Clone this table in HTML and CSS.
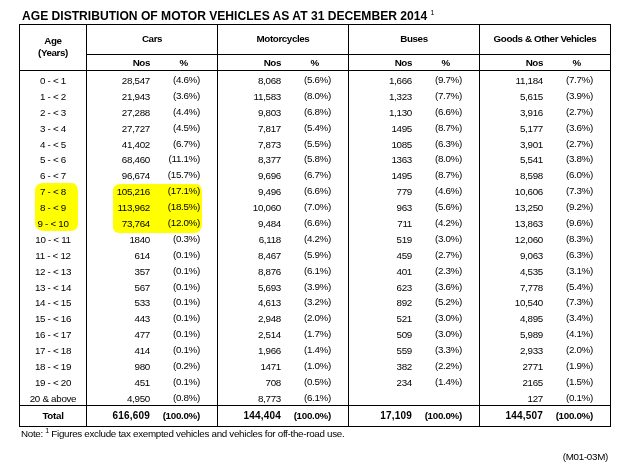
FILE: index.html
```html
<!DOCTYPE html>
<html>
<head>
<meta charset="utf-8">
<link rel="stylesheet" href="styles.css">
</head>
<body>
<div class="page">
  <div class="title">AGE DISTRIBUTION OF MOTOR VEHICLES AS AT 31 DECEMBER 2014 <sup class="tsup">1</sup></div>
  <div class="wrap">
    <div class="tbl">
      <div class="agehd">Age<br>(Years)</div>
      <div class="g">Cars</div>
      <div class="g">Motorcycles</div>
      <div class="g">Buses</div>
      <div class="g">Goods &amp; Other Vehicles</div>
      <div class="hn">Nos</div><div class="hp">%</div>
      <div class="hn">Nos</div><div class="hp">%</div>
      <div class="hn">Nos</div><div class="hp">%</div>
      <div class="hn">Nos</div><div class="hp">%</div>

      <div class="a">0 - &lt; 1</div><div class="n">28,547</div><div class="p">(4.6%)</div><div class="n">8,068</div><div class="p">(5.6%)</div><div class="n">1,666</div><div class="p">(9.7%)</div><div class="n">11,184</div><div class="p">(7.7%)</div>
      <div class="a">1 - &lt; 2</div><div class="n">21,943</div><div class="p">(3.6%)</div><div class="n">11,583</div><div class="p">(8.0%)</div><div class="n">1,323</div><div class="p">(7.7%)</div><div class="n">5,615</div><div class="p">(3.9%)</div>
      <div class="a">2 - &lt; 3</div><div class="n">27,288</div><div class="p">(4.4%)</div><div class="n">9,803</div><div class="p">(6.8%)</div><div class="n">1,130</div><div class="p">(6.6%)</div><div class="n">3,916</div><div class="p">(2.7%)</div>
      <div class="a">3 - &lt; 4</div><div class="n">27,727</div><div class="p">(4.5%)</div><div class="n">7,817</div><div class="p">(5.4%)</div><div class="n">1495</div><div class="p">(8.7%)</div><div class="n">5,177</div><div class="p">(3.6%)</div>
      <div class="a">4 - &lt; 5</div><div class="n">41,402</div><div class="p">(6.7%)</div><div class="n">7,873</div><div class="p">(5.5%)</div><div class="n">1085</div><div class="p">(6.3%)</div><div class="n">3,901</div><div class="p">(2.7%)</div>
      <div class="a">5 - &lt; 6</div><div class="n">68,460</div><div class="p">(11.1%)</div><div class="n">8,377</div><div class="p">(5.8%)</div><div class="n">1363</div><div class="p">(8.0%)</div><div class="n">5,541</div><div class="p">(3.8%)</div>
      <div class="a">6 - &lt; 7</div><div class="n">96,674</div><div class="p">(15.7%)</div><div class="n">9,696</div><div class="p">(6.7%)</div><div class="n">1495</div><div class="p">(8.7%)</div><div class="n">8,598</div><div class="p">(6.0%)</div>
      <div class="a">7 - &lt; 8</div><div class="n">105,216</div><div class="p">(17.1%)</div><div class="n">9,496</div><div class="p">(6.6%)</div><div class="n">779</div><div class="p">(4.6%)</div><div class="n">10,606</div><div class="p">(7.3%)</div>
      <div class="a">8 - &lt; 9</div><div class="n">113,962</div><div class="p">(18.5%)</div><div class="n">10,060</div><div class="p">(7.0%)</div><div class="n">963</div><div class="p">(5.6%)</div><div class="n">13,250</div><div class="p">(9.2%)</div>
      <div class="a">9 - &lt; 10</div><div class="n">73,764</div><div class="p">(12.0%)</div><div class="n">9,484</div><div class="p">(6.6%)</div><div class="n">711</div><div class="p">(4.2%)</div><div class="n">13,863</div><div class="p">(9.6%)</div>
      <div class="a">10 - &lt; 11</div><div class="n">1840</div><div class="p">(0.3%)</div><div class="n">6,118</div><div class="p">(4.2%)</div><div class="n">519</div><div class="p">(3.0%)</div><div class="n">12,060</div><div class="p">(8.3%)</div>
      <div class="a">11 - &lt; 12</div><div class="n">614</div><div class="p">(0.1%)</div><div class="n">8,467</div><div class="p">(5.9%)</div><div class="n">459</div><div class="p">(2.7%)</div><div class="n">9,063</div><div class="p">(6.3%)</div>
      <div class="a">12 - &lt; 13</div><div class="n">357</div><div class="p">(0.1%)</div><div class="n">8,876</div><div class="p">(6.1%)</div><div class="n">401</div><div class="p">(2.3%)</div><div class="n">4,535</div><div class="p">(3.1%)</div>
      <div class="a">13 - &lt; 14</div><div class="n">567</div><div class="p">(0.1%)</div><div class="n">5,693</div><div class="p">(3.9%)</div><div class="n">623</div><div class="p">(3.6%)</div><div class="n">7,778</div><div class="p">(5.4%)</div>
      <div class="a">14 - &lt; 15</div><div class="n">533</div><div class="p">(0.1%)</div><div class="n">4,613</div><div class="p">(3.2%)</div><div class="n">892</div><div class="p">(5.2%)</div><div class="n">10,540</div><div class="p">(7.3%)</div>
      <div class="a">15 - &lt; 16</div><div class="n">443</div><div class="p">(0.1%)</div><div class="n">2,948</div><div class="p">(2.0%)</div><div class="n">521</div><div class="p">(3.0%)</div><div class="n">4,895</div><div class="p">(3.4%)</div>
      <div class="a">16 - &lt; 17</div><div class="n">477</div><div class="p">(0.1%)</div><div class="n">2,514</div><div class="p">(1.7%)</div><div class="n">509</div><div class="p">(3.0%)</div><div class="n">5,989</div><div class="p">(4.1%)</div>
      <div class="a">17 - &lt; 18</div><div class="n">414</div><div class="p">(0.1%)</div><div class="n">1,966</div><div class="p">(1.4%)</div><div class="n">559</div><div class="p">(3.3%)</div><div class="n">2,933</div><div class="p">(2.0%)</div>
      <div class="a">18 - &lt; 19</div><div class="n">980</div><div class="p">(0.2%)</div><div class="n">1471</div><div class="p">(1.0%)</div><div class="n">382</div><div class="p">(2.2%)</div><div class="n">2771</div><div class="p">(1.9%)</div>
      <div class="a">19 - &lt; 20</div><div class="n">451</div><div class="p">(0.1%)</div><div class="n">708</div><div class="p">(0.5%)</div><div class="n">234</div><div class="p">(1.4%)</div><div class="n">2165</div><div class="p">(1.5%)</div>
      <div class="a">20 &amp; above</div><div class="n">4,950</div><div class="p">(0.8%)</div><div class="n">8,773</div><div class="p">(6.1%)</div><div class="n"></div><div class="p"></div><div class="n">127</div><div class="p">(0.1%)</div>

      <div class="a t">Total</div><div class="n t tn">616,609</div><div class="p t">(100.0%)</div><div class="n t tn">144,404</div><div class="p t">(100.0%)</div><div class="n t tn">17,109</div><div class="p t">(100.0%)</div><div class="n t tn">144,507</div><div class="p t">(100.0%)</div>
    </div>
    <div class="hl hl-age"></div>
    <div class="hl hl-cars"></div>
  </div>
  <div class="note">Note: <sup class="nsup">1</sup> Figures exclude tax exempted vehicles and vehicles for off-the-road use.</div>
  <div class="code">(M01-03M)</div>
</div>
</body>
</html>
```
FILE: styles.css
```css
html, body {
  margin: 0;
  padding: 0;
  background: #fff;
}
body {
  font-family: "Liberation Sans", Arial, sans-serif;
  color: #000;
}
.page {
  padding: 10px 19px 0 19px;
}
.title {
  font-size: 12.1px;
  font-weight: bold;
  line-height: 13px;
  height: 13px;
  padding-left: 3px;
  margin-bottom: 1px;
  white-space: nowrap;
}
.tsup {
  font-size: 7px;
  font-weight: normal;
  vertical-align: top;
  line-height: 7px;
  position: relative;
  top: -1px;
}
.wrap {
  position: relative;
  width: max-content;
}
.tbl {
  display: grid;
  grid-template-columns: 66px repeat(4, 64px 67px);
  grid-template-rows: 30px 16px repeat(21, 15.9px) 21px;
  border: 1px solid #000;
  font-size: 9.8px;
  letter-spacing: -0.3px;
}
.tbl > div {
  box-sizing: border-box;
  display: flex;
  align-items: center;
  white-space: nowrap;
  line-height: 11px;
}
.agehd {
  grid-row: span 2;
  flex-direction: column;
  justify-content: center;
  text-align: center;
  font-weight: bold;
  letter-spacing: -0.4px;
  line-height: 12px !important;
  border-bottom: 1px solid #000;
  padding-bottom: 1px;
}
.g {
  grid-column: span 2;
  justify-content: center;
  font-weight: bold;
  letter-spacing: -0.4px;
  border-left: 1px solid #000;
  border-bottom: 1px solid #000;
  padding-bottom: 2px;
}
.hn {
  justify-content: flex-end;
  font-weight: bold;
  letter-spacing: -0.4px;
  border-left: 1px solid #000;
  border-bottom: 1px solid #000;
}
.hp {
  justify-content: flex-end;
  font-weight: bold;
  padding-right: 29px;
  border-bottom: 1px solid #000;
}
.a {
  justify-content: center;
  padding-top: 3px;
}
.n {
  justify-content: flex-end;
  border-left: 1px solid #000;
  padding-top: 3px;
}
.p {
  justify-content: flex-end;
  padding-right: 17px;
  padding-top: 1px;
}
.t {
  border-top: 1px solid #000;
  font-weight: bold;
  padding-top: 0;
}
.tn {
  font-size: 10px;
  letter-spacing: 0.2px;
}
.hl {
  position: absolute;
  background: #ffff00;
  mix-blend-mode: multiply;
  pointer-events: none;
}
.hl-age {
  left: 16px;
  top: 159px;
  width: 43px;
  height: 48px;
  border-radius: 8px 6px 7px 9px / 7px 8px 6px 7px;
}
.hl-cars {
  left: 94px;
  top: 160px;
  width: 89px;
  height: 49px;
  border-radius: 7px 6px 8px 6px / 6px 7px 8px 6px;
}
.note {
  font-size: 9.8px;
  letter-spacing: -0.3px;
  line-height: 11px;
  margin-top: 1px;
  padding-left: 2px;
  white-space: nowrap;
}
.nsup {
  font-size: 7px;
  vertical-align: top;
  line-height: 6px;
}
.code {
  font-size: 9.8px;
  letter-spacing: -0.3px;
  line-height: 11px;
  text-align: right;
  margin-top: 12px;
}
```
